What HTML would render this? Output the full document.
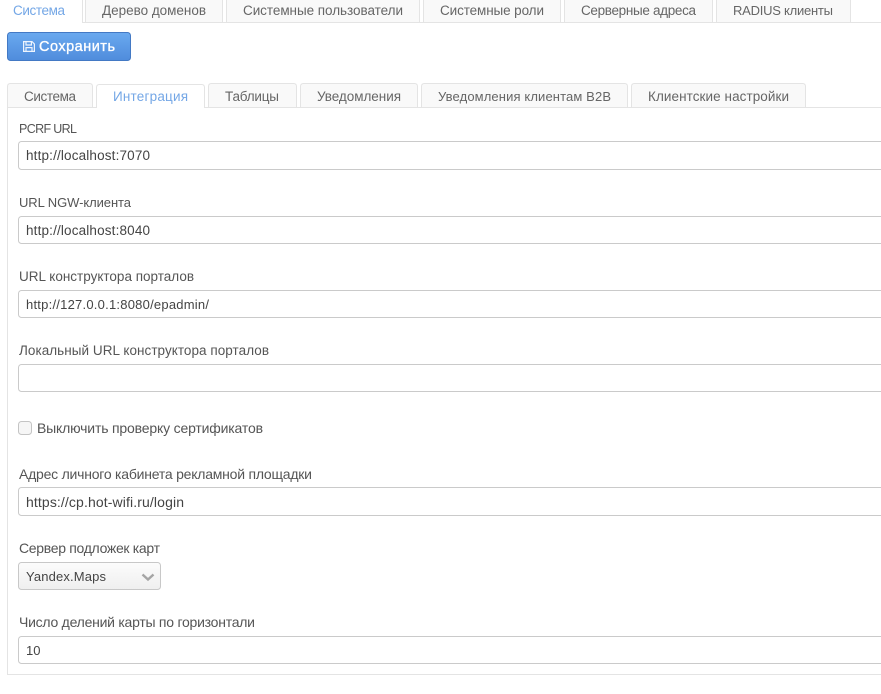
<!DOCTYPE html>
<html><head><meta charset="utf-8"><style>
html,body{margin:0;padding:0;background:#fff;width:881px;height:694px;overflow:hidden}
svg{display:block}
text{font-family:"Liberation Sans",sans-serif;font-size:13.5px;fill:#666}
.l{fill:#555;font-size:14px}.v{fill:#444;font-size:13.5px}.a{fill:#74a7e6}
.t{fill:#f9f9f9;stroke:#e4e4e4}
.i{fill:#fff;stroke:#cacaca}
</style></head><body>
<svg width="881" height="694" viewBox="0 0 881 694" xmlns="http://www.w3.org/2000/svg">
<defs>
<linearGradient id="b" x1="0" y1="0" x2="0" y2="1"><stop offset="0" stop-color="#6aa9ef"/><stop offset="1" stop-color="#4f8cdc"/></linearGradient>
<linearGradient id="s" x1="0" y1="0" x2="0" y2="1"><stop offset="0" stop-color="#fcfcfc"/><stop offset="1" stop-color="#efefef"/></linearGradient>
</defs>
<!-- top tabs -->
<path class="t" d="M85.500 -2V22.500H222.500V-2Z"/>
<path class="t" d="M226.500 -2V22.500H419.500V-2Z"/>
<path class="t" d="M423.500 -2V22.500H560.500V-2Z"/>
<path class="t" d="M564.500 -2V22.500H712.500V-2Z"/>
<path class="t" d="M716.500 -2V22.500H850.500V-2Z"/>
<path d="M82.500 -2V22.500H881" fill="none" stroke="#e4e4e4"/>
<text x="13" y="15" class="a" textLength="52">Система</text>
<text x="102" y="15" textLength="104">Дерево доменов</text>
<text x="243" y="15" textLength="160">Системные пользователи</text>
<text x="440" y="15" textLength="104">Системные роли</text>
<text x="581" y="15" textLength="115">Серверные адреса</text>
<text x="733" y="15" style="font-size:13px" textLength="100">RADIUS клиенты</text>
<!-- save button -->
<rect x="7.500" y="32.500" width="123" height="28" rx="3" fill="url(#b)" stroke="#4379c4"/>
<g fill="none" stroke="#eef4fd" stroke-width="1.200"><path d="M23.600 41.600H32L34.400 44V51.400H23.600Z"/><path d="M26 41.800V45H31.400V41.800M26 51.200V47.600H32V51.200"/></g>
<text x="39" y="51" textLength="76" style="font-size:14.500px;fill:#fff;stroke:#fff;stroke-width:.35px">Сохранить</text>
<!-- inner tabs -->
<path class="t" d="M7.500 107.500V86.500Q7.500 83.500 10.500 83.500H89.500Q92.500 83.500 92.500 86.500V107.500"/>
<path class="t" d="M208.500 107.500V86.500Q208.500 83.500 211.500 83.500H293.500Q296.500 83.500 296.500 86.500V107.500"/>
<path class="t" d="M300.500 107.500V86.500Q300.500 83.500 303.500 83.500H414.500Q417.500 83.500 417.500 86.500V107.500"/>
<path class="t" d="M421.500 107.500V86.500Q421.500 83.500 424.500 83.500H624.500Q627.500 83.500 627.500 86.500V107.500"/>
<path class="t" d="M631.500 107.500V86.500Q631.500 83.500 634.500 83.500H802.500Q805.500 83.500 805.500 86.500V107.500"/>
<path d="M7.500 107.500V674.500H881M96.500 107.500H7.500M204.500 107.500H881" fill="none" stroke="#e4e4e4"/>
<path d="M96.500 108V87.500Q96.500 84.500 99.500 84.500H201.500Q204.500 84.500 204.500 87.500V108" fill="#fff" stroke="#e4e4e4"/>
<text x="24" y="101" textLength="52">Система</text>
<text x="113" y="101" class="a" textLength="75">Интеграция</text>
<text x="225" y="101" textLength="54">Таблицы</text>
<text x="317" y="101" textLength="84">Уведомления</text>
<text x="438" y="101" style="font-size:13px" textLength="173">Уведомления клиентам B2B</text>
<text x="648" y="101" textLength="141">Клиентские настройки</text>
<!-- form -->
<text x="19" y="133" class="l" style="font-size:12.500px" textLength="58">PCRF URL</text>
<rect class="i" x="18.500" y="141.500" width="880" height="28" rx="3"/>
<text x="26" y="160" class="v" textLength="124">http://localhost:7070</text>

<text x="19" y="207" class="l" style="font-size:13px" textLength="112">URL NGW-клиента</text>
<rect class="i" x="18.500" y="216.500" width="880" height="27" rx="3"/>
<text x="26" y="235" class="v" textLength="124">http://localhost:8040</text>

<text x="19" y="281" class="l" style="font-size:13.500px" textLength="175">URL конструктора порталов</text>
<rect class="i" x="18.500" y="290.500" width="880" height="27" rx="3"/>
<text x="26" y="309" class="v" style="font-size:13px" textLength="183">http://127.0.0.1:8080/epadmin/</text>

<text x="19" y="355" class="l" style="font-size:13.500px" textLength="250">Локальный URL конструктора порталов</text>
<rect class="i" x="18.500" y="364.500" width="880" height="27" rx="3"/>

<rect x="18.500" y="421.500" width="13" height="13" rx="3" fill="#f6f6f6" stroke="#c4c4c4"/>
<text x="37" y="433" class="l" textLength="226">Выключить проверку сертификатов</text>

<text x="19" y="479" class="l" textLength="293">Адрес личного кабинета рекламной площадки</text>
<rect class="i" x="18.500" y="487.500" width="880" height="28" rx="3"/>
<text x="26" y="507" class="v" style="font-size:14px" textLength="158">https://cp.hot-wifi.ru/login</text>

<text x="19" y="553" class="l" textLength="141">Сервер подложек карт</text>
<rect x="18.500" y="562.500" width="142" height="27" rx="3" fill="url(#s)" stroke="#c8c8c8"/>
<text x="26" y="581" class="v" style="font-size:13px" textLength="80">Yandex.Maps</text>
<path d="M142.500 574.500L148 579.500L153.500 574.500" fill="none" stroke="#a5a5a5" stroke-width="2.400"/>

<text x="19" y="627" class="l" textLength="236">Число делений карты по горизонтали</text>
<rect class="i" x="18.500" y="636.500" width="880" height="27" rx="3"/>
<text x="26" y="655" class="v" style="font-size:13px" textLength="14.500">10</text>
</svg>
</body></html>
